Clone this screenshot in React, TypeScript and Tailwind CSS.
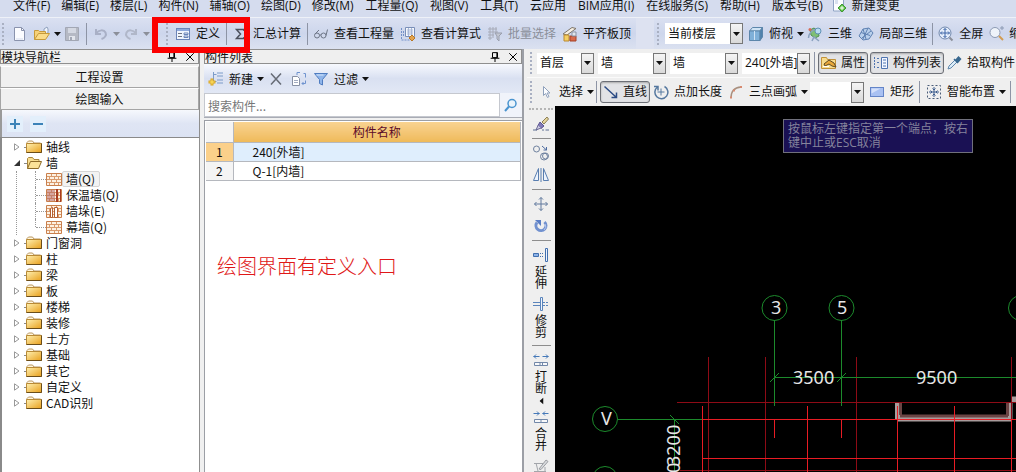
import React from "react";
import clsx from "clsx";

type IconProps = { children: React.ReactNode; className?: string };

const Icon = ({ children, className }: IconProps) => (
  <svg viewBox="0 0 16 16" fill="none" className={clsx("size-4 shrink-0", className)} aria-hidden="true">
    {children}
  </svg>
);

// toolbar icons
const NewIcon = () => (
  <Icon>
    <path d="M3.5 1.500h7l3 3v10h-10z" fill="#fbfcff" stroke="#8a93ad" />
    <path d="M10.500 1.500v3h3" stroke="#8a93ad" />
    <path d="M5 13h7" stroke="#d5ddee" />
  </Icon>
);
const OpenIcon = () => (
  <Icon>
    <path d="M10 3l3-2 1 2v4l-4 1z" fill="#eef3fb" stroke="#8fa0bd" />
    <path d="M.5 13.500v-9h4l1 1h6v3" fill="#f6d27a" stroke="#c79a3a" />
    <path d="M.5 13.500l4-6h11l-4 6z" fill="#fbdc88" stroke="#c79a3a" />
  </Icon>
);
const SaveIcon = () => (
  <Icon>
    <path d="M1.500 1.500h13v13h-13z" fill="#b5b9c4" stroke="#a2a7b4" />
    <path d="M4 2h8v5H4z" fill="#d4d8e2" />
    <path d="M5 10h6v4H5z" fill="#e2e5ec" />
    <path d="M6 11h2v3H6z" fill="#a2a7b4" />
  </Icon>
);
const UndoIcon = () => (
  <Icon>
    <path d="M3 3v5h5M3 7.500c3-4 8-4 9.500-1s-1 5.500-4 6.500" stroke="#a9b0c6" strokeWidth="2" />
  </Icon>
);
const RedoIcon = () => (
  <Icon>
    <path d="M13 3v5H8M13 7.500c-3-4-8-4-9.500-1s1 5.500 4 6.500" stroke="#b0b7c9" strokeWidth="2" />
  </Icon>
);
const DefineIcon = () => (
  <Icon>
    <rect x="1.500" y="2.500" width="13" height="11" fill="#f1f5fd" stroke="#6b84b8" />
    <path d="M2 3h12v2H2z" fill="#8fa9dc" />
    <path d="M3 7.500h4M3 10.500h4" stroke="#6d7280" />
    <path d="M9 7h4v1.500H9zM9 10h4v1.500H9z" stroke="#6b84b8" fill="#fff" />
  </Icon>
);
const SigmaIcon = () => (
  <Icon>
    <path d="M12 5V3.500H4.500L8.500 8l-4 4.500H12V11" stroke="#4b4f5c" strokeWidth="1.500" />
  </Icon>
);
const GlassesIcon = () => (
  <Icon>
    <circle cx="4" cy="9.500" r="2.500" stroke="#6e7687" />
    <circle cx="10.500" cy="9.500" r="2.500" stroke="#6e7687" />
    <path d="M6.500 9h1.500M2 8l4-4M13 9.500l1.500-6" stroke="#6e7687" />
  </Icon>
);
const FormulaIcon = () => (
  <Icon>
    <path d="M5.500 1.500h9v9h-9z" fill="#f4f7fd" stroke="#7a8fb8" />
    <path d="M7 4h6M7 6h6M7 8h6M8.500 2v8M11.500 2v8" stroke="#a9b8d6" />
    <path d="M1.500 2v12h9M3.500 5v6" stroke="#7391c9" strokeDasharray="2 1" />
    <path d="M12 9l3 3-3 3-3-3z" fill="#e3a34d" stroke="#b87724" />
  </Icon>
);
const BatchIcon = () => (
  <Icon>
    <path d="M1 3h9M1 6h10M1 9h6M1 12h4M3 1v13M6 1v11M9 1v6" stroke="#a7abb8" />
    <path d="M8 7h7l-3 3v5l-2-2v-3z" fill="#c3c7d2" stroke="#9a9fad" />
  </Icon>
);
const AlignIcon = () => (
  <Icon>
    <path d="M1 8l9-6.500 4 1L5 9z" fill="#f7f0e4" stroke="#7e7568" />
    <path d="M2 9h5v6H2z" fill="#f5cf62" stroke="#bb8a30" />
    <path d="M8 10h6v5H8z" fill="#d9694a" stroke="#a54326" />
    <path d="M10 6h4v4h-4z" fill="#e2e6ec" stroke="#8b93a3" />
  </Icon>
);
const CubeIcon = () => (
  <Icon>
    <path d="M1.500 5l3-3.500h10L12 5z" fill="#cfe3f5" stroke="#5c86ab" />
    <path d="M1.500 5H12v9.500H1.500z" fill="#7fb0d8" stroke="#5c86ab" />
    <path d="M12 5l2.500-3.500V11L12 14.500z" fill="#4f82ad" stroke="#5c86ab" />
    <path d="M6.500 5v9" stroke="#cfe3f5" />
  </Icon>
);
const OrbitIcon = () => (
  <Icon>
    <path d="M3 4l4-2 4 3 1 5-4 2-4-3z" fill="#7fbf74" stroke="#4e9150" />
    <path d="M1.500 12c0-4 3-8 8-9M5 15l2-4 5 4" stroke="#8ba2bf" strokeWidth="1.500" />
    <circle cx="11" cy="5" r="3" fill="#b8dcf0" stroke="#5f91b5" />
    <circle cx="3" cy="3.500" r="1.500" fill="#d76a56" />
  </Icon>
);
const LocalIcon = () => (
  <Icon>
    <path d="M1 10l4-7 6-1 4 5-4 6-6 1z" fill="#b9d0ec" stroke="#5f82b3" />
    <path d="M3 6.500l9 3M5 3l3 10M10 2l-5 11M13 5l-9 7" stroke="#5f82b3" />
  </Icon>
);
const FullIcon = () => (
  <Icon>
    <circle cx="7" cy="7" r="6" fill="#e5eefb" stroke="#7289ad" />
    <path d="M7 2.500v9M2.500 7h9M5.500 4L7 2.500 8.500 4M5.500 10L7 11.500 8.500 10M4 5.500L2.500 7 4 8.500M10 5.500L11.500 7 10 8.500" stroke="#3c64a6" />
    <path d="M11.500 11.500l3 3" stroke="#8b8f99" strokeWidth="2" />
  </Icon>
);
const ZoomIcon = () => (
  <Icon>
    <circle cx="7" cy="6.500" r="5" fill="#eef3fa" stroke="#8c9ab3" />
    <path d="M11 10l4 4" stroke="#d29c52" strokeWidth="2" />
    <path d="M12 2h4M14 0v4" stroke="#8c9ab3" />
  </Icon>
);
const ChangeIcon = () => (
  <Icon>
    <path d="M2.500 0h8l2 2v11h-10z" fill="#fbfdff" stroke="#8fa3c4" />
    <path d="M4 3h3M4 5h3" stroke="#b5c4de" />
    <path d="M11 6l4 4-4 4-4-4z" fill="#5fc24a" stroke="#3f9a32" />
    <path d="M11 8v4M9 10h4" stroke="#fff" />
  </Icon>
);

// component list icons
const AddIcon = () => (
  <Icon>
    <path d="M5.500 1v10M5.500 3.500h3M5.500 10.500h3M9 2h6M9 5h6M9 9h6M9 12h6" stroke="#7d9cc9" />
    <path d="M4 7.500v7M.5 11h7" stroke="#d9a520" strokeWidth="3" />
    <path d="M4 8.500v5M1.500 11h5" stroke="#ffe36b" />
  </Icon>
);
const DeleteIcon = () => (
  <Icon>
    <path d="M3 2.500l10 11M13 2.500l-10 11" stroke="#666b75" strokeWidth="1.500" />
  </Icon>
);
const CopyIcon = () => (
  <Icon>
    <path d="M1.500 5.500h5l2 2v7h-7z" fill="#fff" stroke="#8790a4" />
    <path d="M3 9.500h4M3 11.500h4" stroke="#a2abc0" />
    <path d="M6 4V1.500h3M12.500 2.500h2v4M14.500 9.500v3H11M12.500 11l-1.500 1.500 1.500 1.500" stroke="#6f93cf" />
  </Icon>
);
const FilterIcon = () => (
  <Icon>
    <path d="M1.500 2.500h13l-5 6v5.500l-3-1.500v-4z" fill="#8fb5ea" stroke="#4f7cc0" />
    <path d="M3.500 4h7" stroke="#d6e6fb" />
  </Icon>
);
const SearchIcon = () => (
  <Icon>
    <circle cx="9" cy="6.500" r="4" fill="#eaf4fc" stroke="#4a94cf" strokeWidth="1.500" />
    <path d="M6 9.500L2 14" stroke="#4a94cf" strokeWidth="2" />
  </Icon>
);

// drawing toolbar icons
const PropIcon = () => (
  <Icon>
    <path d="M.5 13.500v-11h5l1 2h8v9z" fill="#f8dc8c" stroke="#c1923a" />
    <path d="M3 9l5-4 5 3 2 4-4-1-3-2-4 2z" fill="#e9a83a" stroke="#5f4a22" />
    <path d="M2 11.500h6" stroke="#fff" />
  </Icon>
);
const ListIcon = () => (
  <Icon>
    <path d="M8.500 2.500h6v11h-6z" fill="#f2f6ff" stroke="#4f74b0" />
    <path d="M10 5h3M10 8h3M10 11h3" stroke="#4f74b0" />
    <path d="M1.500 2v12M4 3.500h3M4 7.500h3M4 12.500h3" stroke="#4f74b0" strokeDasharray="2 1" />
  </Icon>
);
const PickIcon = () => (
  <Icon>
    <path d="M2 14l1-3 6-6 2 2-6 6z" fill="#dcecf8" stroke="#6289ad" />
    <path d="M8 4l4 4M10 5l2.500-3 2 2L12 7z" fill="#39688f" stroke="#39688f" strokeWidth="1.500" />
  </Icon>
);
const CursorIcon = () => (
  <Icon>
    <path d="M5.500 2.500v9l2-2 2 4 1.500-1-2-3.500h3z" fill="#fbfcff" stroke="#8ea0bb" />
  </Icon>
);
const LineIcon = () => (
  <Icon>
    <path d="M1.500 2.500l12 11M13.500 8.500v5h-5" stroke="#2c4c85" strokeWidth="1.500" />
  </Icon>
);
const PointIcon = () => (
  <Icon>
    <path d="M4.500 3a6.500 6.500 0 1 0 7-.5M1 2.500h4v4" stroke="#55789f" strokeWidth="1.500" />
    <path d="M8 4.500v7M4.500 8h7" stroke="#55789f" />
  </Icon>
);
const ArcIcon = () => (
  <Icon>
    <path d="M3 14C3 8 6 3.500 13 3" stroke="#a8907f" strokeWidth="1.500" />
    <path d="M2 12.500h2v2H2zM5 5.500h2v2H5zM12 2h2v2h-2z" fill="#d78a70" />
  </Icon>
);
const RectIcon = () => (
  <Icon>
    <rect x="1.500" y="3.500" width="13" height="9" fill="#a9c1f2" stroke="#6485c8" />
    <path d="M2.500 4.500h9l-9 5z" fill="#d4e0fa" />
  </Icon>
);
const SmartIcon = () => (
  <Icon>
    <rect x="1.500" y="1.500" width="13" height="13" stroke="#4b5d78" strokeDasharray="2 2" />
    <path d="M8 3v10M3 8h10M6.500 4.500L8 6l1.500-1.500M6.500 11.500L8 10l1.500 1.500M4.500 6.500L6 8 4.500 9.500M11.500 6.500L10 8l1.500 1.500" stroke="#3c5c8d" />
  </Icon>
);

// edit strip icons
const BrushIcon = () => (
  <Icon>
    <path d="M9 6l5-5 1.500 2-4.500 5z" fill="#e5d59c" stroke="#8c7f55" />
    <path d="M7 6l4 4-3 2.500-3-3z" fill="#8079b8" stroke="#5a548f" />
    <path d="M5 9.500L3 14l5-2" fill="#cfcde6" stroke="#6c6894" />
    <path d="M0 14h4M9 14h2M12.500 14H16" stroke="#5c6e92" />
  </Icon>
);
const DuplicateIcon = () => (
  <Icon>
    <circle cx="3.500" cy="4" r="3" stroke="#6e819e" />
    <circle cx="11" cy="11.500" r="3.500" stroke="#6e819e" />
    <circle cx="12.500" cy="11" r="3" stroke="#6e819e" />
    <path d="M9 1l4.500 4M13.500 2v3h-3" stroke="#4f6da1" />
  </Icon>
);
const MirrorIcon = () => (
  <Icon>
    <path d="M5.500 1.500v12h-5zM10.500 1.500v12h5z" fill="#edf4fd" stroke="#597eb0" />
    <path d="M8 1v14" stroke="#597eb0" />
  </Icon>
);
const MoveIcon = () => (
  <Icon>
    <path d="M8 1.500v13M1.500 8h13M6 3.500l2-2 2 2M6 12.500l2 2 2-2M3.500 6l-2 2 2 2M12.500 6l2 2-2 2" stroke="#60799d" />
  </Icon>
);
const RotateIcon = () => (
  <Icon>
    <path d="M11.500 4a5 5 0 1 1-7.500.5" stroke="#7191cf" strokeWidth="3" />
    <path d="M2 2h6v6z" fill="#5a7ec6" />
    <path d="M12 6a4.500 4.500 0 0 1-1 6" stroke="#b9caf0" />
  </Icon>
);
const ExtendIcon = () => (
  <Icon>
    <path d="M.5 6.500h5v3h-5z" fill="#8db3e8" stroke="#416fae" />
    <path d="M7 6.500h4M7 9.500h4" stroke="#416fae" strokeDasharray="1 1" />
    <path d="M12.500 1.500h2v13h-2z" fill="#eef4fd" stroke="#416fae" />
  </Icon>
);
const TrimIcon = () => (
  <Icon>
    <path d="M7.500 1.500h2v13h-2z" fill="#eef4fd" stroke="#5a84bb" />
    <path d="M0 6.500h7M0 9.500h7" stroke="#5a84bb" />
    <path d="M10 6.500h6M10 9.500h6" stroke="#5a84bb" strokeDasharray="2 1" />
  </Icon>
);
const BreakIcon = () => (
  <Icon>
    <path d="M0.500 4.500h6M3 2.500l-2 2 2 2M9.500 4.500h6M13 2.500l2 2-2 2" stroke="#4478b8" />
    <path d="M1.500 10.500h13v3h-13zM7 10.500v3M9.500 10.500v3" fill="#f7f8fa" stroke="#7187a8" />
  </Icon>
);
const MergeIcon = () => (
  <Icon>
    <path d="M0.500 4.500h6M4 2.500l2 2-2 2M9.500 4.500h6M12 2.500l-2 2 2 2" stroke="#4478b8" />
    <path d="M1.500 10.500h13v3h-13zM8 10.500v3" fill="#f7f8fa" stroke="#7187a8" />
  </Icon>
);
const EditIcon = () => (
  <Icon>
    <path d="M1 5.500h9M3 5l2 8M1 13.500h12M12 9v4" stroke="#a2a5aa" />
    <path d="M6 11l7-9 2 1.500-7 8z" fill="#d8dadd" stroke="#9b9ea3" />
  </Icon>
);

// tree icons
const FolderIcon = () => (
  <Icon>
    <defs>
      <linearGradient id="folder" x1="0" y1="0" x2="1" y2="1">
        <stop offset="0" stopColor="#fff0b0" />
        <stop offset="1" stopColor="#e89f1c" />
      </linearGradient>
    </defs>
    <path d="M1 5V3.500L2.500 2h4L8 4h6.500v2" fill="#fff6dc" stroke="#b99662" />
    <path d="M.5 4.500h15v9H.5z" fill="url(#folder)" stroke="#b98a35" />
    <path d="M.5 13.500h15v-9" stroke="#6b4d19" />
  </Icon>
);
const FolderOpenIcon = () => (
  <Icon>
    <path d="M1.500 13.500v-10l1-1h4l1.500 2h5v2" fill="#f8de90" stroke="#a8853e" />
    <path d="M1.500 13.500l3-7h11l-3 7z" fill="#fbe298" stroke="#8d6b28" />
  </Icon>
);
const BrickIcon = ({ variant }: { variant: string }) => (
  <Icon>
    <path d="M.5 2.500h15v12H.5z" fill="#fdf1e2" stroke="#c97f4c" />
    <path d="M1 5.500h14M1 8.500h14M1 11.500h14M5.500 3v3M10.500 3v3M3.500 6v3M8.500 6v3M12.500 6v3M5.500 9v3M10.500 9v3M3.500 12v2M8.500 12v2M12.500 12v2" stroke="#d99a6c" />
    {variant === "warm" && <path d="M1 3h8v11H1z" fill="#b66a6a" opacity=".55" />}
    {variant === "warm" && <path d="M10 2h2v13h-2zM14 2h1v13h-1z" fill="#a83c22" />}
    {variant === "pier" && <path d="M4.500 5.500l2-1v10h-2zM8.500 4.500h3v10h-3z" fill="#fff" stroke="#b55f32" />}
  </Icon>
);

const Caret = ({ className }: { className?: string }) => (
  <svg viewBox="0 0 7 4" className={clsx("h-1 w-[7px] shrink-0", className)} aria-hidden="true">
    <path d="M0 0h7L3.500 4z" fill="currentColor" />
  </svg>
);

const Grip = ({ className }: { className?: string }) => (
  <span className={clsx("h-[22px] w-[3px] shrink-0 border-l-2 border-dotted border-[#a9b0c2]", className)} />
);

const Sep = ({ className }: { className?: string }) => (
  <span className={clsx("h-[22px] w-px shrink-0 bg-[#8d94a5]", className)} />
);

type ToolProps = {
  icon: React.ReactNode;
  label?: string;
  name?: string;
  caret?: boolean;
  pressed?: boolean;
  disabled?: boolean;
  className?: string;
};

const Tool = ({ icon, label, name, caret, pressed, disabled, className }: ToolProps) => (
  <button
    type="button"
    aria-label={label ?? name}
    disabled={disabled}
    className={clsx(
      "flex shrink-0 items-center whitespace-nowrap",
      pressed && "h-[22px] rounded-[3px] border border-[#6c6f76] bg-[#e2e3e6] px-[2px] shadow-[inset_0_1px_2px_#aaaaaa]",
      disabled && "text-[#8b8f99]",
      className,
    )}
  >
    {icon}
    {label && <span className={pressed ? "ml-1" : "ml-[5px]"}>{label}</span>}
    {caret && <Caret className="ml-1" />}
  </button>
);

type ComboProps = { label: string; value: string; className?: string };

const Combo = ({ label, value, className }: ComboProps) => (
  <label className={clsx("flex h-[21px] shrink-0 bg-white", className)}>
    <select aria-label={label} className="min-w-0 flex-1 appearance-none overflow-hidden bg-white pl-[3px] outline-none">
      <option>{value}</option>
    </select>
    <span className="pointer-events-none flex w-[13px] shrink-0 items-center justify-center border border-[#777777] bg-linear-to-b from-[#f4f4f4] to-[#d9d9d9]">
      <Caret />
    </span>
  </label>
);

const editMenus = ["文件(F)", "编辑(E)", "楼层(L)", "构件(N)", "辅轴(O)", "绘图(D)", "修改(M)"];
const appMenus = [
  "工程量(Q)", "视图(V)", "工具(T)", "云应用", "BIM应用(I)", "在线服务(S)", "帮助(H)", "版本号(B)",
];

const MenuBar = () => (
  <nav className="flex h-[17px] items-start gap-3 bg-[#d5dcee] pl-[13px] leading-3 whitespace-nowrap">
    <div className="flex gap-[11px]">
      {editMenus.map((menu) => (
        <button key={menu} type="button" className="shrink-0">
          {menu}
        </button>
      ))}
    </div>
    <div className="flex gap-3">
      {appMenus.map((menu) => (
        <button key={menu} type="button" className="shrink-0">
          {menu}
        </button>
      ))}
    </div>
    <button type="button" className="-ml-1 flex h-3 shrink-0 items-center">
      <ChangeIcon />
      <span className="ml-[5px]">新建变更</span>
    </button>
  </nav>
);

const MainToolbar = () => (
  <div className="flex h-8 items-center overflow-hidden border-t border-[#eef1f8] bg-linear-to-b from-[#dae0f1] via-[#cdd6ec] to-[#dbe1f0]">
    <Grip className="ml-[2px]" />
    <Tool className="ml-[6px]" icon={<NewIcon />} name="新建" />
    <Tool className="ml-[7px]" icon={<OpenIcon />} name="打开" caret />
    <Tool className="ml-[3px]" icon={<SaveIcon />} name="保存" disabled />
    <Sep className="ml-[6px]" />
    <Tool className="ml-[6px]" icon={<UndoIcon />} name="撤销" caret disabled />
    <Tool className="ml-[3px]" icon={<RedoIcon />} name="恢复" caret disabled />
    <Grip className="ml-4" />
    <Tool className="ml-[6px]" icon={<DefineIcon />} label="定义" />
    <Sep className="ml-[6px]" />
    <Tool className="ml-[5px]" icon={<SigmaIcon />} label="汇总计算" />
    <Sep className="ml-[6px]" />
    <Tool className="ml-[5px]" icon={<GlassesIcon />} label="查看工程量" />
    <Tool className="ml-[6px]" icon={<FormulaIcon />} label="查看计算式" />
    <Tool className="ml-[6px]" icon={<BatchIcon />} label="批量选择" disabled />
    <Tool className="ml-[6px]" icon={<AlignIcon />} label="平齐板顶" />
    <span className="ml-[5px] h-8 w-[18px] shrink-0 bg-[#dde2f1]" />
    <Grip className="ml-[3px]" />
    <Combo label="楼层显示" value="当前楼层" className="ml-[5px] w-[78px]" />
    <Tool className="ml-[5px]" icon={<CubeIcon />} label="俯视" caret />
    <Tool className="ml-[3px]" icon={<OrbitIcon />} label="三维" />
    <Tool className="ml-[6px]" icon={<LocalIcon />} label="局部三维" />
    <Sep className="ml-[5px]" />
    <Tool className="ml-[5px]" icon={<FullIcon />} label="全屏" />
    <Tool className="ml-[5px]" icon={<ZoomIcon />} label="缩放" />
  </div>
);

const PanelTitle = ({ title }: { title: string }) => (
  <header className="flex h-[15px] items-center border border-[#8f8f8f] bg-[#efefef] leading-[14px]">
    <h2 className="flex-1 whitespace-nowrap">{title}</h2>
    <button type="button" aria-label="固定">
      <Icon className="h-[10px]! w-[10px]!">
        <path d="M4 1h8v8H4zM1 10h14M8 10v6M11 1v8" stroke="#000" strokeWidth="1.600" />
      </Icon>
    </button>
    <button type="button" aria-label="关闭" className="mr-[3px] ml-2">
      <Icon className="h-[10px]! w-[10px]!">
        <path d="M2 2l12 12M14 2L2 14" stroke="#000" strokeWidth="1.600" />
      </Icon>
    </button>
  </header>
);

type Node = { name: string; children?: { name: string; variant: string }[] };

const tree: Node[] = [
  { name: "轴线" },
  {
    name: "墙",
    children: [
      { name: "墙(Q)", variant: "plain" },
      { name: "保温墙(Q)", variant: "warm" },
      { name: "墙垛(E)", variant: "pier" },
      { name: "幕墙(Q)", variant: "plain" },
    ],
  },
  { name: "门窗洞" },
  { name: "柱" },
  { name: "梁" },
  { name: "板" },
  { name: "楼梯" },
  { name: "装修" },
  { name: "土方" },
  { name: "基础" },
  { name: "其它" },
  { name: "自定义" },
  { name: "CAD识别" },
];

const TreeItem = ({ node }: { node: Node }) => (
  <li>
    <div className="flex h-4 items-center">
      <svg viewBox="0 0 6 8" className="h-2 w-[6px]" aria-hidden="true">
        {node.children ? (
          <path d="M6 1v6H0z" fill="#333" />
        ) : (
          <path d="M.5.8v6.400L5 4z" fill="#fff" stroke="#999" />
        )}
      </svg>
      <span className="ml-1 w-[2px] border-t border-dotted border-[#888888]" />
      {node.children ? <FolderOpenIcon /> : <FolderIcon />}
      <span className="ml-1">{node.name}</span>
    </div>
    {node.children && (
      <ul className="ml-[2px] border-l border-dotted border-[#999999] pl-[18px]">
        {node.children.map((child, i) => (
          <li key={child.name} className="flex h-4 items-center">
            <span
              className={clsx(
                "w-px border-l border-dotted border-[#999999]",
                i === node.children!.length - 1 ? "h-2 self-start" : "h-4",
              )}
            />
            <span className="w-[10px] border-t border-dotted border-[#999999]" />
            <BrickIcon variant={child.variant} />
            <span
              className={clsx(
                "border pr-1 pl-[3px] leading-[14px]",
                i === 0 ? "rounded-[2px] border-[#d5d5d5] bg-[#f3f3f3]" : "border-transparent",
              )}
            >
              {child.name}
            </span>
          </li>
        ))}
      </ul>
    )}
  </li>
);

const ModulePanel = () => (
  <aside className="flex w-[200px] shrink-0 flex-col border-r border-[#8f8f8f] bg-[#f0f0f0] font-['Noto_Sans_CJK_SC',sans-serif]">
    <PanelTitle title="模块导航栏" />
    <button type="button" className="mt-[2px] h-[22px] border border-[#a5a5a5] border-t-white bg-[#f0f0f0]">
      工程设置
    </button>
    <button type="button" className="h-[22px] border border-[#a5a5a5] border-t-white bg-[#f0f0f0]">
      绘图输入
    </button>
    <div className="flex h-[27px] shrink-0 items-center gap-[7px] border-l-2 border-[#9a9a9a] bg-linear-to-b from-[#f6f8fd] via-[#dfe5f4] to-[#dce3f3] pl-[5px]">
      <button type="button" aria-label="全部展开">
        <Icon>
          <rect width="16" height="16" fill="#e3effb" />
          <path d="M8 3v10M3 8h10" stroke="#3c83b8" strokeWidth="2" />
        </Icon>
      </button>
      <button type="button" aria-label="全部折叠">
        <Icon>
          <rect width="16" height="16" fill="#e3effb" />
          <path d="M3 8h10" stroke="#3c83b8" strokeWidth="2" />
        </Icon>
      </button>
    </div>
    <ul className="flex-1 border-t border-l-2 border-[#8a8a8a] bg-white pt-px pl-3">
      {tree.map((node) => (
        <TreeItem key={node.name} node={node} />
      ))}
    </ul>
  </aside>
);

const components = ["240[外墙]", "Q-1[内墙]"];

const ComponentPanel = () => (
  <section className="ml-1 flex w-[320px] shrink-0 flex-col border-r-2 border-[#9c9fa6] bg-[#f0f0f0] font-['Noto_Sans_CJK_SC',sans-serif]">
    <PanelTitle title="构件列表" />
    <div className="flex h-[29px] shrink-0 items-center bg-linear-to-b from-[#f7f9fe] via-[#d9e0f1] to-[#e2e8f5] pl-1">
      <Tool icon={<AddIcon />} label="新建" caret />
      <Tool className="ml-1" icon={<DeleteIcon />} name="删除" />
      <Tool className="ml-[7px]" icon={<CopyIcon />} name="复制" />
      <Tool className="ml-[6px]" icon={<FilterIcon />} label="过滤" caret />
    </div>
    <form className="flex h-[25px] shrink-0 items-center border-b border-[#a9acb5] bg-[#f0f3fa]">
      <input
        type="search"
        aria-label="搜索构件"
        placeholder="搜索构件..."
        className="h-6 min-w-0 flex-1 border border-[#c5c8cf] bg-white px-[3px] outline-none placeholder:text-[#777777]"
      />
      <button type="button" aria-label="搜索" className="flex w-[22px] justify-center">
        <SearchIcon />
      </button>
    </form>
    <div className="mt-[2px] flex-1 border-t border-l border-[#9c9fa6] bg-white px-px pt-px">
      <table className="w-full border-collapse">
        <thead>
          <tr className="h-5">
            <th className="w-[27px] border-r border-b border-[#b5b8be] bg-[#f4f4f4]" />
            <th className="border-r border-b border-[#b5b8be] bg-linear-to-b from-[#f9d391] to-[#efba59] p-0 font-normal text-[#5c0a28]">
              构件名称
            </th>
          </tr>
        </thead>
        <tbody>
          {components.map((name, i) => (
            <tr key={name} className={clsx("h-[19px]", i === 0 && "bg-[#dfeefd]")}>
              <td className={clsx("border-r border-b border-[#b5b8be] p-0 text-center", i === 0 ? "bg-[#fbd08a]" : "bg-[#f4f4f4]")}>
                {i + 1}
              </td>
              <td className="border-r border-b border-[#b5b8be] p-0 pl-[19px]">{name}</td>
            </tr>
          ))}
        </tbody>
      </table>
      <p className="mt-[73px] ml-[11px] text-[20px] leading-6 font-light text-[#e01818]">绘图界面有定义入口</p>
    </div>
  </section>
);

const SelectionBar = () => (
  <div className="flex h-[29px] shrink-0 items-center overflow-hidden border-b border-[#fafafa] bg-[#efefef]">
    <Grip className="ml-[3px]" />
    <Combo label="楼层" value="首层" className="ml-1 w-[57px]" />
    <Combo label="构件类别" value="墙" className="ml-1 w-[68px]" />
    <Combo label="构件类型" value="墙" className="ml-1 w-[68px]" />
    <Combo label="构件" value="240[外墙]" className="ml-1 w-[68px]" />
    <Sep className="ml-1" />
    <Tool className="ml-[3px]" icon={<PropIcon />} label="属性" pressed />
    <Tool className="ml-[2px]" icon={<ListIcon />} label="构件列表" pressed />
    <Tool className="ml-[2px]" icon={<PickIcon />} label="拾取构件" />
  </div>
);

const DrawBar = () => (
  <div className="flex h-7 shrink-0 items-center overflow-hidden bg-[#efefef]">
    <Grip className="ml-[3px]" />
    <Tool className="ml-[5px]" icon={<CursorIcon />} label="选择" caret />
    <Sep className="ml-[2px]" />
    <Tool className="ml-[3px]" icon={<LineIcon />} label="直线" pressed />
    <Tool className="ml-[3px]" icon={<PointIcon />} label="点加长度" />
    <Tool className="ml-[6px]" icon={<ArcIcon />} label="三点画弧" caret />
    <Combo label="弧方向" value="" className="ml-[2px] w-[54px]" />
    <Tool className="ml-[5px]" icon={<RectIcon />} label="矩形" />
    <Sep className="ml-[5px]" />
    <Tool className="ml-[6px]" icon={<SmartIcon />} label="智能布置" caret />
    <Sep className="ml-1" />
    <Tool className="ml-1" icon={<PickIcon />} name="修改" />
  </div>
);

const VSep = () => <span className="my-[6px] h-px w-[19px] shrink-0 bg-[#8d8d8d]" />;

const StripTool = ({ icon, label, caret }: { icon: React.ReactNode; label?: string; caret?: boolean }) => (
  <button type="button" className="flex w-4 shrink-0 flex-col items-center leading-3">
    {icon}
    {label && <span className="mt-[3px] w-3 break-all">{label}</span>}
    {caret && <Caret className="mt-1 rotate-90" />}
  </button>
);

const EditStrip = () => (
  <div className="flex w-7 shrink-0 flex-col items-center overflow-hidden bg-[#efefef]">
    <span className="mt-[2px] mb-[6px] w-6 shrink-0 border-t-2 border-dotted border-[#b5b5b5]" />
    <StripTool icon={<BrushIcon />} />
    <VSep />
    <StripTool icon={<DuplicateIcon />} />
    <span className="h-[6px] shrink-0" />
    <StripTool icon={<MirrorIcon />} />
    <VSep />
    <StripTool icon={<MoveIcon />} />
    <span className="h-[6px] shrink-0" />
    <StripTool icon={<RotateIcon />} />
    <VSep />
    <StripTool icon={<ExtendIcon />} label="延伸" />
    <span className="h-[6px] shrink-0" />
    <StripTool icon={<TrimIcon />} label="修剪" />
    <VSep />
    <StripTool icon={<BreakIcon />} label="打断" caret />
    <span className="h-[6px] shrink-0" />
    <StripTool icon={<MergeIcon />} label="合并" />
    <span className="h-[6px] shrink-0" />
    <StripTool icon={<EditIcon />} />
  </div>
);

const Canvas = () => (
  <main className="relative min-w-0 flex-1 overflow-hidden bg-black">
    <svg className="absolute top-0 left-0 h-full w-full font-['Noto_Sans',sans-serif] text-[18px]" fill="none">
      {/* walls */}
      <path d="M343 297v17M343 312.500h114M454.500 297v17M457 293.500h10" stroke="#a89c9c" strokeWidth="6" />
      <path d="M345.500 297v12M345 310h108M452.500 297v13" stroke="#6b4444" strokeWidth="3" />

      {/* auxiliary lines */}
      <path
        d="M153.500 251v120M210.500 251v120M301.500 251v120M456.500 251v120M122 296.500h900M125 364.500h900"
        stroke="#8e0b16"
      />
      <path
        d="M147.500 300v80M252.500 300v80M342.500 300v80M399.500 300v80M456.500 313v80M147 313.500h900M147 352.500h900M219.500 313v19M286.500 313v19"
        stroke="#e81c24"
      />

      {/* axis grid */}
      <g stroke="#1c8a2c">
        <path d="M219.500 214v86M286.500 214v86M219 271.500h900M63 313.500h84M119.500 313v70" />
        <path d="M215 276l9-9M282 276l9-9M115 309l9 9" />
        <circle cx="219.500" cy="202" r="12.500" />
        <circle cx="286.500" cy="202" r="12.500" />
        <circle cx="466" cy="202" r="12.500" />
        <circle cx="50" cy="313" r="12.500" />
        <circle cx="50" cy="373" r="12.500" />
      </g>

      <g fill="#e6e6e6">
        <text x="216" y="208">3</text>
        <text x="282" y="208">5</text>
        <text x="46" y="319">V</text>
        <text x="238" y="278">3500</text>
        <text x="361" y="278">9500</text>
        <text transform="translate(125 360) rotate(-90)">3200</text>
        <text transform="translate(125 367) rotate(-90)">0</text>
      </g>
    </svg>
    <div
      role="tooltip"
      className="absolute top-[13px] left-[228px] w-[190px] border border-[#70707c] bg-[#1a1154] px-1 py-[2px] leading-[14px] text-[#85839c]"
    >
      按鼠标左键指定第一个端点，按右键中止或ESC取消
    </div>
  </main>
);

export default function App() {
  return (
    <div className="relative flex h-screen flex-col overflow-hidden bg-[#f0f0f0] font-['Open_Sans','Noto_Sans_CJK_SC',sans-serif] text-[12px] leading-4 text-[#111111]">
      <MenuBar />
      <MainToolbar />
      <div className="flex min-h-0 flex-1">
        <ModulePanel />
        <ComponentPanel />
        <div className="ml-[3px] flex min-w-0 flex-1 flex-col">
          <SelectionBar />
          <DrawBar />
          <div className="flex min-h-0 flex-1">
            <EditStrip />
            <Canvas />
          </div>
        </div>
      </div>
      {/* highlight frame around the define button */}
      <div className="pointer-events-none absolute top-[17px] left-[152px] h-9 w-[98px] border-[6px] border-[#fb0000]" />
    </div>
  );
}
